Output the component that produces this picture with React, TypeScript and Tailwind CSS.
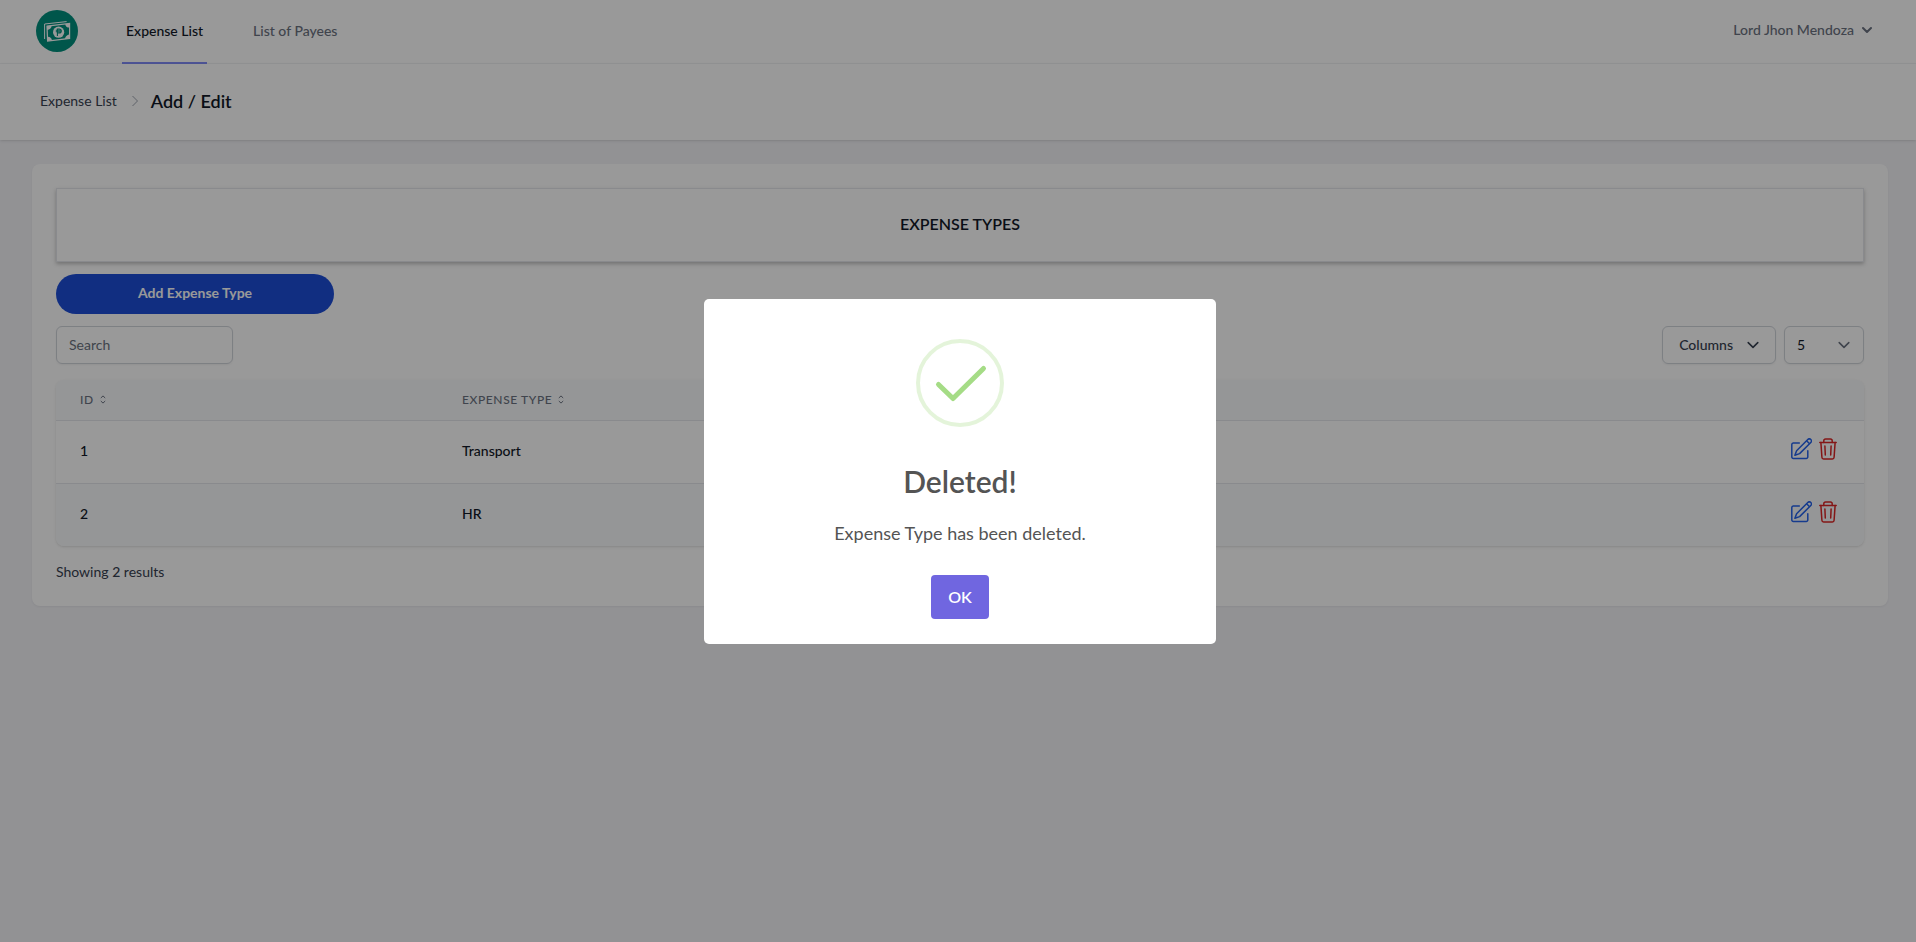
import { useState } from "react";

type ExpenseType = {
  id: number;
  name: string;
};

const EXPENSE_TYPES: ExpenseType[] = [
  { id: 1, name: "Transport" },
  { id: 2, name: "HR" },
];

function Logo() {
  return (
    <svg viewBox="0 0 42 42" className="size-[42px]" aria-hidden="true">
      <circle cx="21" cy="21" r="21" fill="#008f7d" />
      <g fill="none" stroke="#fff">
        <path d="M8.6 29V14l22-2.4" strokeWidth="1" />
        <path d="M11 16.2 33.6 13.4v15L11.6 31Z" strokeWidth="1.2" />
      </g>
      <g fill="#fff">
        <path d="M11 16.2l4.6-.6c0 2.4-1.6 4-4.6 4.4ZM33.6 13.4l-4.4.5c.2 2.4 1.6 3.6 4.4 3.6ZM11.4 31v-4.2c2.6-.2 4.2 1.2 4.6 3.6ZM33.6 28.4v-4.2c-2.8.6-4.4 2.2-4.6 4.8Z" />
        <circle cx="22.6" cy="22.2" r="5.6" />
      </g>
      <path d="M21.4 26v-7h1.8a2 2 0 0 1 0 4h-1.8M19.8 20.2h6M19.8 21.8h6" fill="none" stroke="#008f7d" strokeWidth="1.1" />
    </svg>
  );
}

function Chevron({ className, strokeWidth = 1.3 }: { className: string; strokeWidth?: number }) {
  return (
    <svg viewBox="0 0 10 10" className={className} fill="none" stroke="currentColor" aria-hidden="true">
      <path d="M1 3l4 4 4-4" strokeWidth={strokeWidth} strokeLinecap="round" strokeLinejoin="round" />
    </svg>
  );
}

function SortIcon() {
  return (
    <svg viewBox="0 0 6 9" className="h-[9px] w-[6px]" fill="none" stroke="currentColor" aria-hidden="true">
      <path d="M.8 3 3 .9 5.2 3M.8 6 3 8.1 5.2 6" strokeWidth="1" />
    </svg>
  );
}

function EditIcon() {
  return (
    <svg viewBox="0 0 21 22" className="h-[22px] w-[21px]" fill="none" stroke="currentColor" strokeWidth="1.5" aria-hidden="true">
      <path d="M8.3 5H2.2A1.5 1.5 0 0 0 .8 6.5V19a1.5 1.5 0 0 0 1.5 1.5h13a1.5 1.5 0 0 0 1.5-1.5v-6.3" strokeLinecap="round" />
      <path d="M3.9 17.2 5.6 12.7 16.8 1.5a2 2 0 0 1 3 3L8.6 15.6Z" strokeLinejoin="round" />
      <path d="M15.6 2.8l3 3" />
    </svg>
  );
}

function TrashIcon() {
  return (
    <svg viewBox="0 0 18 22" className="h-[22px] w-[18px]" fill="none" stroke="currentColor" strokeWidth="1.5" strokeLinecap="round" aria-hidden="true">
      <path d="M.8 4.6h16.4" />
      <path d="M4.8 4.4V2.7A1.8 1.8 0 0 1 6.6.9h4.8a1.8 1.8 0 0 1 1.8 1.8v1.7" />
      <path d="M1.9 4.6l1 14.7a1.7 1.7 0 0 0 1.7 1.6h8.8a1.7 1.7 0 0 0 1.7-1.6l1-14.7" />
      <path d="M5.9 8l.4 9M12.1 8l-.4 9" />
    </svg>
  );
}

function SuccessIcon() {
  return (
    <svg viewBox="0 0 88 88" className="size-[88px]" fill="none" aria-hidden="true">
      <circle cx="44" cy="44" r="42" stroke="#a5dc86" strokeOpacity="0.3" strokeWidth="4" />
      <path d="M22.5 45.5 37 59.5 67.5 29.5" stroke="#a5dc86" strokeWidth="5" strokeLinecap="round" strokeLinejoin="round" />
    </svg>
  );
}

function DeletedModal({ onClose }: { onClose: () => void }) {
  return (
    <div className="fixed inset-0 z-10 flex items-center justify-center bg-black/40 pl-1">
      <div
        role="dialog"
        aria-modal="true"
        aria-labelledby="modal-title"
        className="flex w-lg flex-col items-center rounded-[5px] bg-white pt-10 pb-[25px] text-[#545454]"
      >
        <SuccessIcon />
        <h2 id="modal-title" className="mt-9 text-3xl font-semibold">
          Deleted!
        </h2>
        <p className="mt-5 text-lg">Expense Type has been deleted.</p>
        <button
          type="button"
          onClick={onClose}
          className="mt-7 h-11 w-[58px] rounded bg-[#7066e0] text-base font-semibold text-white"
        >
          OK
        </button>
      </div>
    </div>
  );
}

export default function App() {
  const [showModal, setShowModal] = useState(true);
  const [search, setSearch] = useState("");

  const rows = EXPENSE_TYPES.filter((type) => type.name.toLowerCase().includes(search.toLowerCase()));

  return (
    <div className="min-h-screen bg-[#f3f3f7] font-['Lato','Open_Sans',sans-serif] text-sm text-[#111827]">
      <nav className="flex h-16 items-stretch border-b border-[#f3f4f6] bg-white pr-11 pl-9">
        <a href="#" aria-label="Home" className="flex items-center pb-px">
          <Logo />
        </a>
        <div className="-mb-px ml-11 flex gap-[42px] font-medium">
          <a href="#" className="flex items-center border-b-2 border-[#818cf8] px-1">
            Expense List
          </a>
          <a href="#" className="flex items-center border-b-2 border-transparent px-1 text-[#6b7280]">
            List of Payees
          </a>
        </div>
        <button type="button" className="ml-auto flex items-center gap-2 pb-1 font-medium text-[#6b7280]">
          Lord Jhon Mendoza
          <Chevron className="size-[10px]" strokeWidth={2} />
        </button>
      </nav>

      <header className="relative flex h-[76px] items-center bg-white px-10 pb-0.5 shadow">
        <a href="#" className="text-[#374151]">
          Expense List
        </a>
        <svg viewBox="0 0 8 12" className="mr-3 ml-3.5 h-3 w-2" fill="none" stroke="#9ca3af" aria-hidden="true">
          <path d="M1.5 1 6.5 6l-5 5" />
        </svg>
        <h1 className="text-lg font-semibold">Add / Edit</h1>
      </header>

      <main className="py-6 pr-7 pl-8">
        <div className="rounded-lg bg-white p-6 shadow-xs">
          <h2 className="flex h-[74px] items-center justify-center border border-[#e5e7eb] pb-0.5 text-base font-semibold shadow-[0_2px_4px_rgba(0,0,0,0.25)]">
            EXPENSE TYPES
          </h2>

          <button type="button" className="mt-3 h-10 w-[278px] rounded-full bg-[#1d4ed8] pb-0.5 font-bold text-white">
            Add Expense Type
          </button>

          <div className="mt-3 flex items-center gap-2">
            <input
              type="text"
              aria-label="Search"
              placeholder="Search"
              value={search}
              onChange={(e) => setSearch(e.target.value)}
              className="h-[38px] w-[177px] rounded-md border border-[#d1d5db] px-3 pb-0.5 shadow-xs placeholder:text-[#6b7280]"
            />
            <button
              type="button"
              className="ml-auto flex h-[38px] items-center gap-3.5 rounded-md border border-[#d1d5db] px-4 font-medium text-[#374151] shadow-xs"
            >
              Columns
              <Chevron className="size-3" />
            </button>
            <div className="relative">
              <select
                aria-label="Rows per page"
                className="h-[38px] w-20 appearance-none rounded-md border border-[#d1d5db] bg-white px-3 shadow-xs"
              >
                <option>5</option>
                <option>10</option>
                <option>25</option>
              </select>
              <Chevron className="pointer-events-none absolute top-[13px] right-3.5 size-3 text-[#6b7280]" />
            </div>
          </div>

          <div className="mt-4 overflow-hidden rounded-lg shadow">
            <table className="w-full text-left">
              <thead className="bg-[#f8fafc] text-xs tracking-wider text-[#6b7280]">
                <tr className="h-10">
                  <th className="w-[382px] px-6 font-medium">
                    <button type="button" className="flex items-center gap-1.5 tracking-wider">
                      ID <SortIcon />
                    </button>
                  </th>
                  <th className="px-6 font-medium">
                    <button type="button" className="flex items-center gap-1.5 tracking-wider">
                      EXPENSE TYPE <SortIcon />
                    </button>
                  </th>
                  <th aria-label="Actions" />
                </tr>
              </thead>
              <tbody className="font-medium">
                {rows.map((type) => (
                  <tr key={type.id} className="h-[63px] border-t border-[#e5e7eb] even:bg-[#f8fafc]">
                    <td className="px-6 pb-0.5">{type.id}</td>
                    <td className="px-6 pb-0.5">{type.name}</td>
                    <td className="pr-[27px] pb-1.5">
                      <div className="flex justify-end gap-[7px]">
                        <button type="button" aria-label={`Edit ${type.name}`} className="text-[#2563eb]">
                          <EditIcon />
                        </button>
                        <button type="button" aria-label={`Delete ${type.name}`} className="text-[#dc2626]">
                          <TrashIcon />
                        </button>
                      </div>
                    </td>
                  </tr>
                ))}
              </tbody>
            </table>
          </div>

          <p className="mt-4 text-[#374151]">
            Showing <span className="font-medium">{rows.length}</span> results
          </p>
        </div>
      </main>

      {showModal && <DeletedModal onClose={() => setShowModal(false)} />}
    </div>
  );
}
